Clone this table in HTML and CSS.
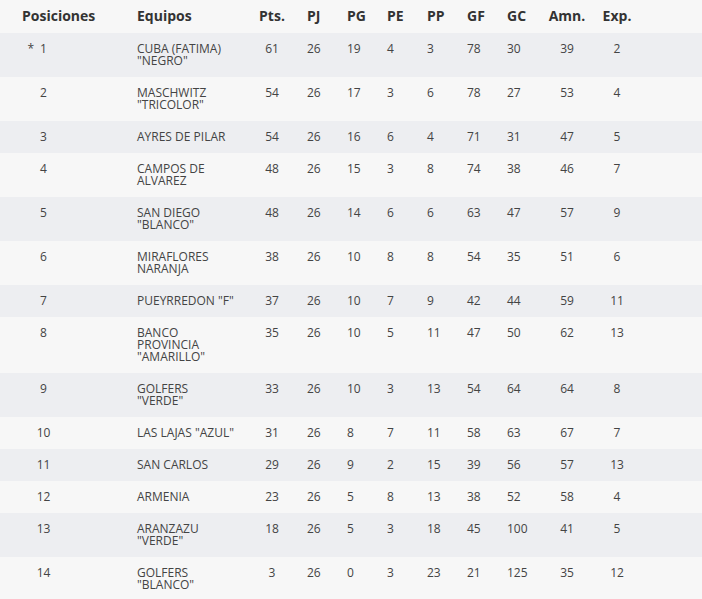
FILE: index.html
```html
<!DOCTYPE html>
<html lang="es">
<head>
<meta charset="utf-8">
<title>Posiciones</title>
<link rel="stylesheet" href="styles.css">
</head>
<body>
<table class="standings">
  <colgroup>
    <col class="c-pos"><col class="c-team"><col class="c-num"><col class="c-num"><col class="c-num"><col class="c-num"><col class="c-num"><col class="c-num"><col class="c-num"><col class="c-amn"><col class="c-exp"><col>
  </colgroup>
  <thead>
    <tr>
      <th class="pos">Posiciones</th>
      <th class="team">Equipos</th>
      <th class="ctr">Pts.</th>
      <th class="lft">PJ</th>
      <th class="lft">PG</th>
      <th class="lft">PE</th>
      <th class="lft">PP</th>
      <th class="lft">GF</th>
      <th class="lft">GC</th>
      <th class="ctr">Amn.</th>
      <th class="ctr">Exp.</th>
      <th></th>
    </tr>
  </thead>
  <tbody>
    <tr><td class="pos"><span class="num"><span class="star">*</span>1</span></td><td class="team">CUBA (FATIMA) "NEGRO"</td><td class="ctr">61</td><td class="lft">26</td><td class="lft">19</td><td class="lft">4</td><td class="lft">3</td><td class="lft">78</td><td class="lft">30</td><td class="ctr">39</td><td class="ctr">2</td><td></td></tr>
    <tr><td class="pos">2</td><td class="team">MASCHWITZ "TRICOLOR"</td><td class="ctr">54</td><td class="lft">26</td><td class="lft">17</td><td class="lft">3</td><td class="lft">6</td><td class="lft">78</td><td class="lft">27</td><td class="ctr">53</td><td class="ctr">4</td><td></td></tr>
    <tr><td class="pos">3</td><td class="team">AYRES DE PILAR</td><td class="ctr">54</td><td class="lft">26</td><td class="lft">16</td><td class="lft">6</td><td class="lft">4</td><td class="lft">71</td><td class="lft">31</td><td class="ctr">47</td><td class="ctr">5</td><td></td></tr>
    <tr><td class="pos">4</td><td class="team">CAMPOS DE ALVAREZ</td><td class="ctr">48</td><td class="lft">26</td><td class="lft">15</td><td class="lft">3</td><td class="lft">8</td><td class="lft">74</td><td class="lft">38</td><td class="ctr">46</td><td class="ctr">7</td><td></td></tr>
    <tr><td class="pos">5</td><td class="team">SAN DIEGO "BLANCO"</td><td class="ctr">48</td><td class="lft">26</td><td class="lft">14</td><td class="lft">6</td><td class="lft">6</td><td class="lft">63</td><td class="lft">47</td><td class="ctr">57</td><td class="ctr">9</td><td></td></tr>
    <tr><td class="pos">6</td><td class="team">MIRAFLORES NARANJA</td><td class="ctr">38</td><td class="lft">26</td><td class="lft">10</td><td class="lft">8</td><td class="lft">8</td><td class="lft">54</td><td class="lft">35</td><td class="ctr">51</td><td class="ctr">6</td><td></td></tr>
    <tr><td class="pos">7</td><td class="team">PUEYRREDON "F"</td><td class="ctr">37</td><td class="lft">26</td><td class="lft">10</td><td class="lft">7</td><td class="lft">9</td><td class="lft">42</td><td class="lft">44</td><td class="ctr">59</td><td class="ctr">11</td><td></td></tr>
    <tr><td class="pos">8</td><td class="team">BANCO PROVINCIA "AMARILLO"</td><td class="ctr">35</td><td class="lft">26</td><td class="lft">10</td><td class="lft">5</td><td class="lft">11</td><td class="lft">47</td><td class="lft">50</td><td class="ctr">62</td><td class="ctr">13</td><td></td></tr>
    <tr><td class="pos">9</td><td class="team">GOLFERS "VERDE"</td><td class="ctr">33</td><td class="lft">26</td><td class="lft">10</td><td class="lft">3</td><td class="lft">13</td><td class="lft">54</td><td class="lft">64</td><td class="ctr">64</td><td class="ctr">8</td><td></td></tr>
    <tr><td class="pos">10</td><td class="team">LAS LAJAS "AZUL"</td><td class="ctr">31</td><td class="lft">26</td><td class="lft">8</td><td class="lft">7</td><td class="lft">11</td><td class="lft">58</td><td class="lft">63</td><td class="ctr">67</td><td class="ctr">7</td><td></td></tr>
    <tr><td class="pos">11</td><td class="team">SAN CARLOS</td><td class="ctr">29</td><td class="lft">26</td><td class="lft">9</td><td class="lft">2</td><td class="lft">15</td><td class="lft">39</td><td class="lft">56</td><td class="ctr">57</td><td class="ctr">13</td><td></td></tr>
    <tr><td class="pos">12</td><td class="team">ARMENIA</td><td class="ctr">23</td><td class="lft">26</td><td class="lft">5</td><td class="lft">8</td><td class="lft">13</td><td class="lft">38</td><td class="lft">52</td><td class="ctr">58</td><td class="ctr">4</td><td></td></tr>
    <tr><td class="pos">13</td><td class="team">ARANZAZU "VERDE"</td><td class="ctr">18</td><td class="lft">26</td><td class="lft">5</td><td class="lft">3</td><td class="lft">18</td><td class="lft">45</td><td class="lft">100</td><td class="ctr">41</td><td class="ctr">5</td><td></td></tr>
    <tr><td class="pos">14</td><td class="team">GOLFERS "BLANCO"</td><td class="ctr">3</td><td class="lft">26</td><td class="lft">0</td><td class="lft">3</td><td class="lft">23</td><td class="lft">21</td><td class="lft">125</td><td class="ctr">35</td><td class="ctr">12</td><td></td></tr>
  </tbody>
</table>
</body>
</html>
```
FILE: styles.css
```css
html, body {
  margin: 0;
  padding: 0;
  background: #f7f7f7;
}
body {
  font-family: "Open Sans", "Liberation Sans", sans-serif;
  color: #444444;
}
.standings {
  width: 100%;
  border-collapse: collapse;
  table-layout: fixed;
}
.c-pos { width: 122px; }
.c-team { width: 130px; }
.c-num { width: 40px; }
.c-amn { width: 70px; }
.c-exp { width: 30px; }

.standings th {
  font-size: 14px;
  font-weight: 700;
  color: #333333;
  height: 33px;
  padding: 0 0 2px 0;
  line-height: 16px;
  vertical-align: middle;
  text-align: left;
  white-space: nowrap;
  box-sizing: border-box;
}
.standings td {
  font-size: 12px;
  line-height: 12px;
  padding: 10px 0 10px 0;
  vertical-align: top;
}
.standings tbody tr:nth-child(odd) {
  background: #edeef1;
}
.standings th.pos { padding-left: 22px; }
.standings td.pos {
  text-align: center;
  padding-right: 35px;
}
.standings .team {
  padding-left: 15px;
  padding-right: 16px;
  text-align: left;
}
.standings .ctr { text-align: center; }
.standings .lft { padding-left: 15px; text-align: left; }
.num { position: relative; }
.star {
  position: absolute;
  right: 100%;
  margin-right: 6px;
}
```
